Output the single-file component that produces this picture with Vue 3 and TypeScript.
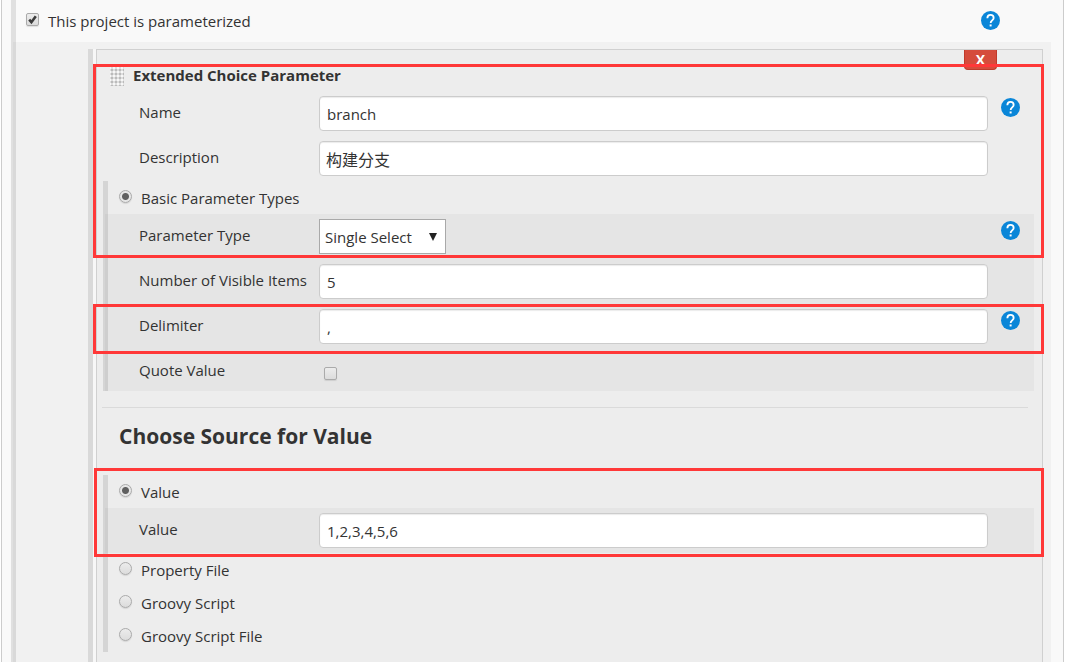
<script setup lang="ts">
import { ref } from 'vue'

const parameterized = ref(true)
const name = ref('branch')
const description = ref('构建分支')
const basic = ref('basic')
const paramType = ref('Single Select')
const visibleItems = ref('5')
const delimiter = ref(',')
const quote = ref(false)
const source = ref('value')
const value = ref('1,2,3,4,5,6')

const otherSources = [
  { id: 'property-file', label: 'Property File' },
  { id: 'groovy-script', label: 'Groovy Script' },
  { id: 'groovy-script-file', label: 'Groovy Script File' },
]
</script>

<template>
  <svg class="defs" aria-hidden="true">
    <symbol id="help-icon" viewBox="0 0 24 24">
      <circle cx="12" cy="12" r="12" fill="#0a86d8" />
      <path d="M8 9.200C8 6.200 9.700 4.800 12 4.800s4 1.500 4 3.900c0 3-3.800 3.200-3.800 6.300" fill="none" stroke="#fff" stroke-width="2.300" />
      <rect x="10.900" y="17" width="2.500" height="2.500" fill="#fff" />
    </symbol>
  </svg>
  <main class="page">
    <section class="block">
      <div class="block-head">
        <label class="choice">
          <span class="tick">
            <input v-model="parameterized" type="checkbox" />
            <svg v-if="parameterized" viewBox="0 0 13 13"><path d="M3.200 6.700 5.400 9.200 9.800 3.300" fill="none" stroke="#3c3c3c" stroke-width="2.600" /></svg>
          </span>
          <span>This project is parameterized</span>
        </label>
        <button class="help" type="button" aria-label="Help"><svg><use href="#help-icon" /></svg></button>
      </div>
      <div class="block-body">
        <div class="params">
          <div class="panel">
            <header class="panel-head">
              <span class="grip"></span>
              <b class="panel-title">Extended Choice Parameter</b>
              <button class="remove" type="button" aria-label="Delete">X</button>
            </header>
            <div class="row">
              <label for="name">Name</label>
              <input id="name" v-model="name" class="field" type="text" />
              <button class="help" type="button" aria-label="Help"><svg><use href="#help-icon" /></svg></button>
            </div>
            <div class="row">
              <label for="description">Description</label>
              <input id="description" v-model="description" class="field cjk" type="text" />
            </div>

            <div class="group">
              <label class="choice option">
                <input v-model="basic" type="radio" name="types" value="basic" />
                <span>Basic Parameter Types</span>
              </label>
              <div class="nested">
                <div class="row">
                  <label for="type">Parameter Type</label>
                  <div class="select">
                    <select id="type" v-model="paramType">
                      <option>Single Select</option>
                      <option>Multi Select</option>
                    </select>
                    <svg viewBox="0 0 8 8"><path d="M0 0h8L4 8z" fill="#222" /></svg>
                  </div>
                  <button class="help" type="button" aria-label="Help"><svg><use href="#help-icon" /></svg></button>
                </div>
                <div class="row">
                  <label for="items">Number of Visible Items</label>
                  <input id="items" v-model="visibleItems" class="field" type="text" />
                </div>
                <div class="row">
                  <label for="delimiter">Delimiter</label>
                  <input id="delimiter" v-model="delimiter" class="field" type="text" />
                  <button class="help" type="button" aria-label="Help"><svg><use href="#help-icon" /></svg></button>
                </div>
                <div class="row short">
                  <label for="quote">Quote Value</label>
                  <span class="tick lone">
                    <input id="quote" v-model="quote" type="checkbox" />
                    <svg v-if="quote" viewBox="0 0 13 13"><path d="M3.200 6.700 5.400 9.200 9.800 3.300" fill="none" stroke="#3c3c3c" stroke-width="2.600" /></svg>
                  </span>
                </div>
              </div>
            </div>

            <hr />
            <h2>Choose Source for Value</h2>

            <div class="group">
              <label class="choice option">
                <input v-model="source" type="radio" name="source" value="value" />
                <span>Value</span>
              </label>
              <div class="nested">
                <div class="row">
                  <label for="value">Value</label>
                  <input id="value" v-model="value" class="field" type="text" />
                </div>
              </div>
              <label v-for="s in otherSources" :key="s.id" class="choice option">
                <input v-model="source" type="radio" name="source" :value="s.id" />
                <span>{{ s.label }}</span>
              </label>
            </div>

            <div class="mark mark-basic"></div>
            <div class="mark mark-delimiter"></div>
            <div class="mark mark-value"></div>
          </div>
        </div>
      </div>
    </section>
  </main>
</template>

<style>
body {
  margin: 0;
  background: #fff;
}
</style>

<style scoped>
* {
  box-sizing: border-box;
}
.defs {
  position: absolute;
  width: 0;
  height: 0;
}
.page,
.page input,
.page select {
  font-family: "Open Sans", "Noto Sans", "Noto Sans CJK SC", sans-serif;
  font-size: 15px;
  line-height: 20px;
  color: #333;
}
.page {
  display: flex;
  min-height: 100vh;
  margin: 0 2px 0 1px;
  padding: 0 12px 0 9px;
  background: #f9f9f9;
  border-left: 1px solid #ccc;
  border-right: 1px solid #ccc;
}
.block {
  flex: 1;
  display: flex;
  flex-direction: column;
  border-left: 5px solid #e0e0e0;
}
.block-head {
  display: flex;
  justify-content: space-between;
  height: 42px;
  padding: 11px 51px 0 10px;
}
.block-body {
  flex: 1;
  display: flex;
  margin-left: -3px;
  padding: 7px 8px 0 75px;
  background: rgba(0, 0, 0, 0.03);
}
.params {
  flex: 1;
  display: flex;
  padding-left: 3px;
  border-left: 5px solid #d9d9d9;
  background: #f7f7f7;
}
.panel {
  position: relative;
  flex: 1;
  padding: 0 8px 10px 6px;
  background: #ededed;
  border: 1px solid #d0d0d0;
  border-bottom: 0;
}
.panel-head {
  display: flex;
  align-items: flex-start;
  height: 41px;
  padding: 0 37px 0 7px;
}
.grip {
  width: 14px;
  height: 22px;
  margin-top: 14px;
  background-color: #f8f8f8;
  background-image: radial-gradient(circle at 2px 2px, #bbb 1px, transparent 2px);
  background-size: 4px 4px;
}
.panel-title {
  flex: 1;
  margin: 15px 0 0 9px;
  font-size: 15px;
}
.remove {
  width: 33px;
  height: 20px;
  padding: 0;
  font: bold 14px/18px "Open Sans", sans-serif;
  color: #fff;
  background: #d54c3c;
  border: 1px solid #c03a2b;
  border-top: 0;
  border-radius: 0 0 4px 4px;
}
.row {
  display: grid;
  grid-template-columns: 180px 1fr 46px;
  align-items: start;
  height: 45px;
  padding: 5px 0 0 36px;
}
.row > label {
  margin-top: 6px;
}
.field {
  width: 100%;
  height: 35px;
  padding: 0 7px;
  background: #fff;
  border: 1px solid #ccc;
  border-radius: 4px;
  box-shadow: inset 0 1px 1px rgba(0, 0, 0, 0.08);
  outline: none;
}
.page .cjk {
  padding: 0 6px;
  font-size: 16px;
}
.help {
  width: 19px;
  height: 19px;
  padding: 0;
  background: none;
  border: 0;
}
.row .help {
  margin: 2px 0 0 13px;
}
.help svg {
  display: block;
  width: 100%;
  height: 100%;
}
.group {
  border-left: 5px solid #d5d5d5;
}
.nested {
  margin-left: -3px;
  background: rgba(0, 0, 0, 0.03);
}
.nested .row {
  padding-left: 34px;
}
.row.short {
  height: 42px;
}
.choice {
  display: flex;
  align-items: flex-start;
  gap: 9px;
}
.option {
  height: 33px;
  padding: 7px 0 0 11px;
}
input[type="checkbox"],
input[type="radio"] {
  appearance: none;
  flex: none;
  display: block;
  width: 13px;
  height: 13px;
  margin: 0;
  border: 1px solid #aaa;
  background: linear-gradient(#ececec, #dcdcdc);
  box-shadow: 0 1px 1px rgba(0, 0, 0, 0.1);
}
input[type="checkbox"] {
  border-radius: 2px;
}
input[type="radio"] {
  margin-top: 2px;
  border-radius: 50%;
}
input[type="radio"]:checked {
  background: radial-gradient(circle, #606060 0 3px, #e6e6e6 4px);
}
.tick {
  position: relative;
  width: 13px;
  height: 13px;
  margin-top: 2px;
}
.tick.lone {
  margin: 13px 0 0 5px;
}
.tick svg {
  position: absolute;
  inset: 0;
  pointer-events: none;
}
.select {
  position: relative;
  width: 127px;
}
.select select {
  appearance: none;
  display: block;
  width: 100%;
  height: 35px;
  padding: 0 5px;
  background: #fff;
  border: 1px solid #a9a9a9;
  border-radius: 0;
  outline: none;
}
.select svg {
  position: absolute;
  top: 14px;
  right: 9px;
  width: 8px;
  height: 8px;
  pointer-events: none;
}
hr {
  height: 1px;
  margin: 16px 6px 0 -1px;
  border: 0;
  background: #dadada;
}
h2 {
  margin: 13px 0 24px 16px;
  font-size: 21px;
  line-height: 30px;
}
.mark {
  position: absolute;
  left: -4px;
  right: -2px;
  border: 3px solid #ff3838;
  pointer-events: none;
}
.mark-basic {
  top: 14px;
  height: 194px;
}
.mark-delimiter {
  top: 254px;
  height: 50px;
}
.mark-value {
  left: -3px;
  top: 418px;
  height: 89px;
}
</style>
